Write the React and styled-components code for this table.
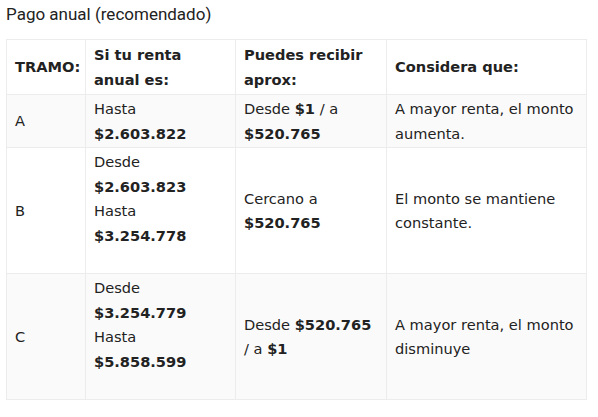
import React from 'react';
import styled, { createGlobalStyle } from 'styled-components';

const GlobalStyle = createGlobalStyle`
  html, body {
    margin: 0;
    padding: 0;
    background: #ffffff;
  }
  body {
    padding: 3px 6px;
  }
`;

const Title = styled.div`
  font-family: Roboto, "Liberation Sans", sans-serif;
  font-size: 17px;
  line-height: 23px;
  color: #222;
  margin-bottom: 13px;
`;

const Table = styled.table`
  width: 581px;
  table-layout: fixed;
  border-collapse: collapse;
  font-family: "DejaVu Sans", Verdana, sans-serif;
  font-size: 14.6px;
  line-height: 24.5px;
  color: #222;
  border: 1px solid #ececec;
`;

const Row = styled.tr`
  background: ${p => (p.$shaded ? '#fafafa' : '#ffffff')};
`;

const Cell = styled.td`
  border: 1px solid #ececec;
  padding: ${p => (p.$head ? '3px 8px 2px' : '2px 8px 1px')};
  padding-bottom: ${p => (p.$extra ? '25px' : undefined)};
  vertical-align: middle;
  text-align: left;
  font-weight: ${p => (p.$head ? 700 : 400)};
  width: ${p => (p.$w ? `${p.$w}px` : 'auto')};
  box-sizing: border-box;
`;

const Strong = styled.b`
  font-weight: 700;
`;

const rows = [
  {
    tramo: 'A',
    renta: (<>Hasta<br /><Strong>$2.603.822</Strong></>),
    recibe: (<>Desde <Strong>$1</Strong> / a<br /><Strong>$520.765</Strong></>),
    considera: 'A mayor renta, el monto aumenta.',
    shaded: true,
  },
  {
    tramo: 'B',
    renta: (<>Desde<br /><Strong>$2.603.823</Strong><br />Hasta<br /><Strong>$3.254.778</Strong></>),
    recibe: (<>Cercano a<br /><Strong>$520.765</Strong></>),
    considera: 'El monto se mantiene constante.',
    extra: true,
  },
  {
    tramo: 'C',
    renta: (<>Desde<br /><Strong>$3.254.779</Strong><br />Hasta<br /><Strong>$5.858.599</Strong></>),
    recibe: (<>Desde <Strong>$520.765</Strong><br />/ a <Strong>$1</Strong></>),
    considera: 'A mayor renta, el monto disminuye',
    shaded: true,
    extra: true,
  },
];

export default function App() {
  return (
    <>
      <GlobalStyle />
      <Title>Pago anual (recomendado)</Title>
      <Table>
        <tbody>
          <Row>
            <Cell $head $w={79}>TRAMO:</Cell>
            <Cell $head $w={150}>Si tu renta anual es:</Cell>
            <Cell $head $w={151}>Puedes recibir aprox:</Cell>
            <Cell $head>Considera que:</Cell>
          </Row>
          {rows.map(r => (
            <Row key={r.tramo} $shaded={r.shaded}>
              <Cell>{r.tramo}</Cell>
              <Cell $extra={r.extra}>{r.renta}</Cell>
              <Cell>{r.recibe}</Cell>
              <Cell>{r.considera}</Cell>
            </Row>
          ))}
        </tbody>
      </Table>
    </>
  );
}
